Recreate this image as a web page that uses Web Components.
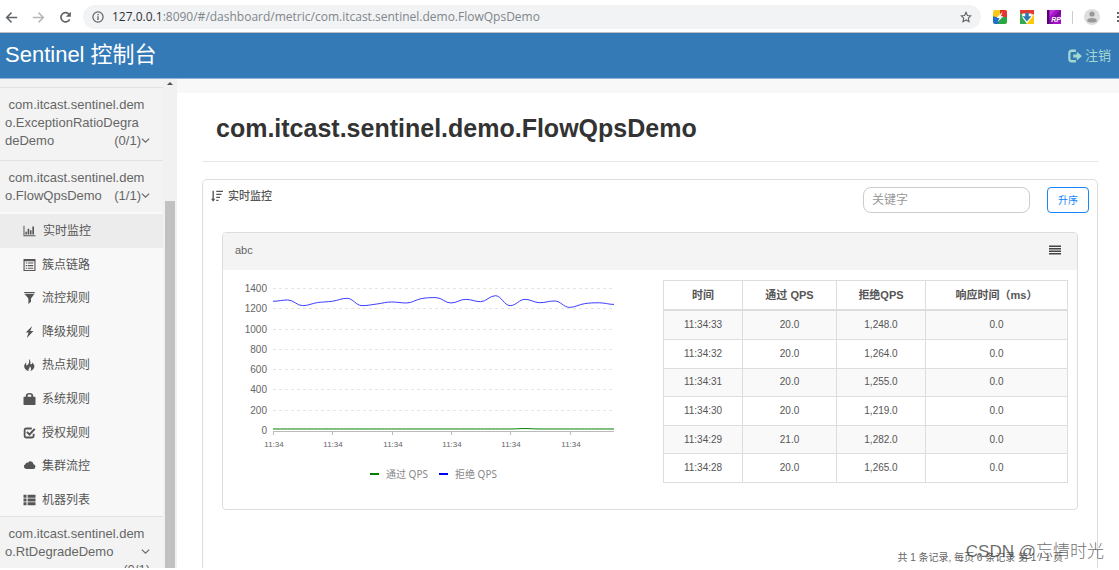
<!DOCTYPE html>
<html lang="zh-CN">
<head>
<meta charset="utf-8">
<title>Sentinel 控制台</title>
<style>
  html, body { height: 100%; margin: 0; }
  body {
    background: #fff; color: #555; overflow: hidden;
    font-family: "Liberation Sans", "Noto Sans CJK SC", sans-serif; font-size: 12px;
  }
</style>
</head>
<body>
<sentinel-app></sentinel-app>
<script>
const ICONS = {
  back: '<path d="M15 8H2M8 2L2 8l6 6" fill="none" stroke="currentColor" stroke-width="1.8"/>',
  forward: '<path d="M1 8h13M8 2l6 6-6 6" fill="none" stroke="currentColor" stroke-width="1.8"/>',
  reload: '<path d="M13.2 10.2A5.7 5.7 0 1 1 12.4 4" fill="none" stroke="currentColor" stroke-width="2"/><path d="M14.6 1v6.2H8.4z"/>',
  info: '<circle cx="8" cy="8" r="6.8" fill="none" stroke="currentColor" stroke-width="1.6"/><path d="M7.1 7h1.8v5H7.1zM7.1 4h1.8v1.8H7.1z"/>',
  star: '<path d="M8 1.8l1.9 4.2 4.6.5-3.4 3.1.9 4.6L8 11.900l-4 2.300.9-4.600L1.500 6.500l4.600-.5z" fill="none" stroke="currentColor" stroke-width="1.500"/>',
  bolt: '<rect width="16" height="16" rx="2.500" fill="#f8ca18"/><path d="M8 0h5.500A2.500 2.500 0 0 1 16 2.500V8H8z" fill="#e2362f"/><path d="M0 7l8 2v7H2.500A2.500 2.500 0 0 1 0 13.500z" fill="#1d6fc4"/><path d="M8 8h8v5.500a2.500 2.500 0 0 1-2.500 2.500H6z" fill="#28a745"/><path d="M11 2L4 9h3.500L5 14l7-7H9z" fill="#fff"/>',
  download: '<path d="M0 0h16v5H0z" fill="#e23c32"/><path d="M0 2l8 14H0z" fill="#35a853"/><path d="M16 5v11H7z" fill="#fbcb08"/><path d="M3 4h10v5l-5 6-5-6z" fill="#fff"/><path d="M6 3h4v4h3l-5 6-5-6h3z" fill="#2f78b7"/>',
  axure: '<rect width="16" height="16" fill="#a312c5"/><path d="M0 0h2.500v16H0z" fill="#540070"/><path d="M3 12L15 0h1v5L5 16H3z" fill="#7c0ba0"/><path d="M4 0h6L3 7V1z" fill="#bf34dc"/>',
  avatar: '<circle cx="8" cy="8" r="8" fill="#dedede"/><circle cx="8" cy="5" r="2.600" fill="#999"/><path d="M3 12c0-2 2-3 5-3s5 1 5 3c-1 1-3 1.500-5 1.500S4 13 3 12z" fill="#999"/>',
  logout: '<path d="M9 2H4.500Q1.500 2 1.500 5v6q0 3 3 3H9" fill="none" stroke="currentColor" stroke-width="2.600"/><path d="M10 3l6 5-6 5v-3.200H6V6.200h4z"/>',
  chart: '<path d="M0 1h1.300v12.600H16V15H0zM2.500 9h2v3.500h-2zM5.500 5h2.200v7.500H5.500zM8.700 7h2v5.500h-2zM11.800 2H14v10.500h-2.200z"/>',
  list: '<path d="M0 0h16v16H0zM1.500 3v11.500h13V3z" fill-rule="evenodd"/><path d="M3 4.500h2V6H3zM6 4.500h7V6H6zM3 8h2v1.500H3zM6 8h7v1.500H6zM3 11.500h2V13H3zM6 11.500h7V13H6z"/>',
  filter: '<path d="M1 0h14v1.500H1zM1.500 2.500h13L10 8.500V13l-3.500 3V8.500z"/>',
  flash: '<path d="M11.500 0L3 8.500h3.700L4.500 16l8.800-9.500H9z"/>',
  fire: '<path d="M7 0c4 3 1 6 3 7 1.200.5 1.600-1 1.300-2.500C14 6.500 15.500 9 14 12c-1 2-3 3.500-5 4 2-3 1-4.500-.5-6.500C8 12 7.500 13 6.500 14L7 16C3 15 .5 12 1 8.500 1.400 6.500 2.500 5.500 3.500 4.500c0 1.500-.2 3.500.8 4C6.500 8 8.500 4 7 0z"/>',
  lock: '<path d="M3 5V4C3 1.300 4.800 0 8 0s5 1.300 5 4v1h2q1 0 1 1v9q0 1-1 1H1q-1 0-1-1V6q0-1 1-1zM5.500 5h5V4c0-1.300-1-1.900-2.500-1.900S5.500 2.700 5.500 4z" fill-rule="evenodd"/>',
  check: '<path d="M11 2H4Q1.500 2 1.500 4.500v7Q1.500 14 4 14h7q2.500 0 2.500-2.500V9" fill="none" stroke="currentColor" stroke-width="2.400"/><path d="M4.500 6.500L8 10l7-7.500" fill="none" stroke="currentColor" stroke-width="2.600"/>',
  cloud: '<path d="M3.500 12A3.400 3.400 0 0 1 2.500 5.500 3 3 0 0 1 6 3.500a4 4 0 0 1 7.300 2A3.300 3.300 0 0 1 13 12z"/>',
  thlist: '<path d="M0 1h4v4H0zM5.500 1H16v4H5.500zM0 6h4v4H0zM5.500 6H16v4H5.500zM0 11h4v4H0zM5.500 11H16v4H5.500z"/>',
  sort: '<path d="M2 1h1.800v10.500h2L2.900 15.500 0 11.500h2zM7 1h9v1.800H7zM7 5h7v1.800H7zM7 9h5v1.800H7zM7 13h3v1.800H7z"/>',
  menu: '<path d="M0 2h16v2H0zM0 5.300h16v2H0zM0 8.600h16v2H0zM0 12h16v2H0z"/>',
  down: '<path d="M1.500 4.500L8 11l6.500-6.500" fill="none" stroke="currentColor" stroke-width="2"/>'
};

function define(name, html, setup) {
  const template = document.createElement('template');
  template.innerHTML = html;
  customElements.define(name, class extends HTMLElement {
    constructor() {
      super();
      this.attachShadow({ mode: 'open' }).append(template.content.cloneNode(true));
    }
    connectedCallback() { if (setup) setup.call(this, this.shadowRoot); }
  });
}

define('g-icon', `
  <style>
    :host { display: inline-block; width: 12px; height: 12px; flex: none; }
    svg { display: block; width: 100%; height: 100%; }
  </style>
  <svg viewBox="0 0 16 16" fill="currentColor" aria-hidden="true"></svg>`,
  function (root) { root.querySelector('svg').innerHTML = ICONS[this.getAttribute('name')] || ''; });

define('browser-bar', `
  <style>
    :host { display: flex; align-items: center; height: 33px; padding-left: 5px; box-sizing: border-box;
      border-bottom: 1px solid #c0c0c0; color: #5f6368; background: #fff; flex: none; }
    button { all: unset; display: flex; }
    .nav { display: flex; gap: 14px; flex: none; }
    .nav g-icon { width: 13px; height: 13px; }
    .nav button:nth-child(2) { color: #b5b7b9; }
    .url { flex: 1; min-width: 0; display: flex; align-items: center; height: 24px; margin: 2px 12px 0 11px; padding: 0 9px;
      border-radius: 12px; background: #f1f3f4; gap: 8px; }
    .text { flex: 1; min-width: 0; overflow: hidden; white-space: nowrap; color: #80868b;
      font: 12px/16px "Open Sans", "Noto Sans", sans-serif; outline: none; }
    .text b { font-weight: 400; color: #303134; }
    .nav, .ext { padding-top: 2px; }
    .ext { display: flex; align-items: center; gap: 13px; flex: none; }
    .ext g-icon { width: 14px; height: 14px; }
    .ext .me { width: 16px; height: 16px; }
    .rp { position: relative; }
    .rp span { position: absolute; right: 0; bottom: 1px; font: italic bold 7px/7px "Liberation Sans", sans-serif; color: #fff; }
    i { width: 1px; height: 13px; margin: 0 -2px; background: #ccc; }
    .dots { width: 2px; height: 11px; margin-left: 4px;
      background: repeating-linear-gradient(#5f6368 0 2px, transparent 2px 4px); }
  </style>
  <div class="nav">
    <button aria-label="后退"><g-icon name="back"></g-icon></button>
    <button aria-label="前进"><g-icon name="forward"></g-icon></button>
    <button aria-label="刷新"><g-icon name="reload"></g-icon></button>
  </div>
  <div class="url">
    <g-icon name="info"></g-icon>
    <div class="text" role="textbox" aria-label="地址" contenteditable="true" spellcheck="false"><b>127.0.0.1</b>:8090/#/dashboard/metric/com.itcast.sentinel.demo.FlowQpsDemo</div>
    <button aria-label="收藏"><g-icon name="star"></g-icon></button>
  </div>
  <div class="ext">
    <button aria-label="扩展"><g-icon name="bolt"></g-icon></button>
    <button aria-label="下载"><g-icon name="download"></g-icon></button>
    <button class="rp"><g-icon name="axure"></g-icon><span>RP</span></button>
    <i></i>
    <button aria-label="用户"><g-icon class="me" name="avatar"></g-icon></button>
    <button class="dots" aria-label="菜单"></button>
  </div>`);

define('app-header', `
  <style>
    :host { display: flex; align-items: center; justify-content: space-between; height: 46px; box-sizing: border-box;
      padding: 0 8px 2px 5px; background: #337ab7; border-bottom: 1px solid #8fb5d8; flex: none; }
    .brand { color: #fff; font-size: 22px; line-height: 30px; text-decoration: none; white-space: nowrap; }
    .out { display: flex; align-items: center; gap: 3px; color: #a4d8d0; font-size: 13px; line-height: 18px;
      text-decoration: none; padding-top: 2px; }
    g-icon { width: 14px; height: 14px; }
  </style>
  <a class="brand" href="#/dashboard">Sentinel 控制台</a>
  <a class="out" href="#/login"><g-icon name="logout"></g-icon>注销</a>`);

define('nav-group', `
  <style>
    :host { display: block; border-top: 1px solid #e2e2e2; }
    .head { display: grid; grid-template-columns: 1fr auto auto; padding: 8px 13px 10px 5px; background: #f3f3f3;
      color: #666; font-size: 13px; line-height: 18px; text-decoration: none; }
    :host([open]) .head { padding-bottom: 7px; margin-bottom: 2px; }
    .full { grid-column: 1 / -1; white-space: pre; }
    .down { width: 9px; height: 9px; margin-top: 4px; }
    :host([wrap]) .count { grid-row: 3; grid-column: 2 / 4; }
    :host([wrap]) .down { grid-row: 2; grid-column: 3; }
    .sub { display: grid; grid-auto-rows: 1fr; min-height: 302px; }
    :host(:not([open])) .sub { display: none; }
  </style>
  <a class="head" href="#/dashboard"><span class="count"></span><g-icon class="down" name="down"></g-icon></a>
  <div class="sub"><slot></slot></div>`,
  function (root) {
    const head = root.querySelector('.head');
    const lines = this.getAttribute('lines').split('|');
    lines.reverse().forEach((text, i) => {
      const span = document.createElement('span');
      if (i) span.className = 'full';
      span.textContent = i === lines.length - 1 ? '\u00a0' + text : text;
      head.prepend(span);
    });
    root.querySelector('.count').textContent = this.getAttribute('count');
  });

define('nav-item', `
  <style>
    :host { display: flex; }
    a { flex: 1; display: flex; align-items: center; gap: 6px; padding: 1px 0 0 23px; color: #555;
      font-size: 12px; line-height: 18px; text-decoration: none; }
    :host([active]) a { background: #ececec; gap: 7px; }
    g-icon { width: 13px; height: 12px; }
  </style>
  <a><g-icon></g-icon><slot></slot></a>`,
  function (root) {
    root.querySelector('g-icon').setAttribute('name', this.getAttribute('icon'));
    root.querySelector('g-icon').connectedCallback();
    root.querySelector('a').href = '#/dashboard/' + this.getAttribute('icon');
  });

define('side-nav', `
  <style>
    :host { display: grid; grid-template-columns: 163px 14px; flex: none; overflow: hidden; background: #f8f8f8; }
    nav { overflow: hidden; min-height: 0; padding-top: 8px; background: linear-gradient(#f3f3f3 8px, #f8f8f8 8px); }
    .bar { display: flex; flex-direction: column; align-items: center; background: #f1f1f1; }
    .up { margin-top: 3px; border: 3px solid transparent; border-top: 0; border-bottom-color: #505050; }
    .thumb { flex: 1; width: 10px; margin-top: 116px; background: #c1c1c1; }
  </style>
  <nav>
    <nav-group lines="com.itcast.sentinel.dem|o.ExceptionRatioDegra|deDemo" count="(0/1)"></nav-group>
    <nav-group open lines="com.itcast.sentinel.dem|o.FlowQpsDemo" count="(1/1)">
      <nav-item active icon="chart">实时监控</nav-item>
      <nav-item icon="list">簇点链路</nav-item>
      <nav-item icon="filter">流控规则</nav-item>
      <nav-item icon="flash">降级规则</nav-item>
      <nav-item icon="fire">热点规则</nav-item>
      <nav-item icon="lock">系统规则</nav-item>
      <nav-item icon="check">授权规则</nav-item>
      <nav-item icon="cloud">集群流控</nav-item>
      <nav-item icon="thlist">机器列表</nav-item>
    </nav-group>
    <nav-group wrap lines="com.itcast.sentinel.dem|o.RtDegradeDemo" count="(0/1)"></nav-group>
  </nav>
  <div class="bar" aria-hidden="true"><div class="up"></div><div class="thumb"></div></div>`);

define('qps-chart', `
  <style>
    :host { display: block; }
    svg { display: block; width: 100%; height: auto; }
    text { fill: #666; font-family: "Liberation Sans", sans-serif; }
    .y { font-size: 10px; text-anchor: end; }
    .x { font-size: 8px; text-anchor: middle; }
    .key { font-family: "Noto Sans", "Noto Sans CJK SC", sans-serif; font-size: 10px; fill: #888; }
  </style>
  <svg viewBox="0 0 420 220" role="img" aria-label="QPS">
    <g class="grid"></g>
    <path class="pass" fill="none" stroke="#008000"/>
    <path class="block" fill="none" stroke="#3c3cff"/>
    <path d="M147 204h9" stroke="#008000" stroke-width="2"/><text class="key" x="163" y="208">通过 QPS</text>
    <path d="M216 204h9" stroke="#00f" stroke-width="2"/><text class="key" x="232" y="208">拒绝 QPS</text>
  </svg>`,
  function (root) {
    const left = 50, right = 391, base = 161, unit = 142 / 1400;
    const block = [1279, 1292, 1236, 1266, 1279, 1308, 1236, 1252, 1272, 1262, 1305, 1315,
                   1262, 1298, 1275, 1334, 1236, 1298, 1265, 1282, 1219, 1255, 1264, 1248];
    const pass = block.map((_, i) => (i === 17 ? 24 : 20));
    const step = (right - left) / (block.length - 1);
    let grid = '';
    for (let v = 0; v <= 1400; v += 200) {
      const y = Math.round(base - v * unit);
      grid += `<text class="y" x="44" y="${y + 3}">${v}</text>`;
      grid += v ? `<path d="M${left} ${y - 0.5}H${right}" stroke="#e4e4e4" stroke-dasharray="3 3"/>`
                : `<path d="M${left} ${y + 0.5}H${right}" stroke="#bbb"/>`;
    }
    for (let i = 0; i < 6; i++) {
      const x = Math.round(left + i * 4 * step);
      grid += `<path d="M${x + 0.5} 161v4" stroke="#bbb"/><text class="x" x="${x + 1}" y="177">11:34</text>`;
    }
    root.querySelector('.grid').innerHTML = grid;
    // Smooth curve whose tangent is flat at each local extreme.
    const curve = data => {
      const p = data.map((v, i) => [left + i * step, base - v * unit]);
      const slope = p.map((q, i) => {
        if (!i || i === p.length - 1) return 0;
        const a = q[1] - p[i - 1][1], b = p[i + 1][1] - q[1];
        return a * b <= 0 ? 0 : (a + b) / 2;
      });
      return p.map((q, i) => i
        ? `C${p[i - 1][0] + step / 2.5} ${p[i - 1][1] + slope[i - 1] / 2.5} ${q[0] - step / 2.5} ${q[1] - slope[i] / 2.5} ${q[0]} ${q[1]}`
        : `M${q[0]} ${q[1]}`).join('');
    };
    root.querySelector('.pass').setAttribute('d', curve(pass));
    root.querySelector('.block').setAttribute('d', curve(block));
  });

define('metric-table', `
  <style>
    :host { display: block; }
    table { width: 100%; height: 203px; border-collapse: collapse; table-layout: fixed; text-align: center; color: #555; }
    th, td { border: 1px solid #ddd; padding: 0; font-size: 10px; line-height: 14px; }
    thead th { height: 28px; border-bottom-width: 2px; font-size: 11px; }
    tbody tr:nth-child(odd) { background: #f9f9f9; }
    .time { width: 79px; }
    .pass { width: 94px; }
    .block { width: 89px; }
  </style>
  <table>
    <colgroup><col class="time"><col class="pass"><col class="block"><col></colgroup>
    <thead><tr><th>时间</th><th>通过 QPS</th><th>拒绝QPS</th><th>响应时间（ms）</th></tr></thead>
    <tbody>
      <tr><td>11:34:33</td><td>20.0</td><td>1,248.0</td><td>0.0</td></tr>
      <tr><td>11:34:32</td><td>20.0</td><td>1,264.0</td><td>0.0</td></tr>
      <tr><td>11:34:31</td><td>20.0</td><td>1,255.0</td><td>0.0</td></tr>
      <tr><td>11:34:30</td><td>20.0</td><td>1,219.0</td><td>0.0</td></tr>
      <tr><td>11:34:29</td><td>21.0</td><td>1,282.0</td><td>0.0</td></tr>
      <tr><td>11:34:28</td><td>20.0</td><td>1,265.0</td><td>0.0</td></tr>
    </tbody>
  </table>`);

define('metric-card', `
  <style>
    :host { display: block; border: 1px solid #ddd; border-radius: 4px; overflow: hidden; }
    header { display: flex; align-items: center; justify-content: space-between; height: 37px; box-sizing: border-box;
      padding: 0 16px 4px 12px; background: #f4f4f4; font-size: 11px; line-height: 16px; color: #666; }
    button { all: unset; display: flex; color: #444; }
    .body { display: grid; grid-template-columns: 420fr 20fr 405fr 9fr; padding-bottom: 19px; }
    metric-table { grid-column: 3; padding-top: 10px; }
  </style>
  <header><slot></slot><button aria-label="菜单"><g-icon name="menu"></g-icon></button></header>
  <div class="body"><qps-chart></qps-chart><metric-table></metric-table></div>`);

define('metric-panel', `
  <style>
    :host { display: block; border: 1px solid #ddd; border-radius: 5px; padding-bottom: 24px; }
    .tools { display: flex; align-items: flex-start; padding: 7px 8px 0; }
    h2 { flex: 1; display: flex; align-items: center; gap: 5px; margin: 1px 0 0; font-size: 11px; line-height: 16px;
      font-weight: 500; color: #555; }
    input { width: 167px; height: 26px; box-sizing: border-box; margin: 0 17px 0 0; padding: 0 8px; border: 1px solid #ccc;
      border-radius: 8px; font: inherit; font-size: 12px; outline: none; }
    input::placeholder { color: #999; }
    .sort { width: 42px; height: 26px; box-sizing: border-box; padding: 0 0 1px; border: 1px solid #1684fc; border-radius: 4px;
      background: #fff; color: #1684fc; font: inherit; font-size: 10px; }
    metric-card { margin: 19px 19px 0; }
    footer { margin-top: 40px; padding-right: 34px; text-align: right; font-size: 10px; line-height: 16px; color: #666; }
  </style>
  <div class="tools">
    <h2><g-icon name="sort"></g-icon>实时监控</h2>
    <input type="text" placeholder="关键字" aria-label="关键字">
    <button class="sort" type="button">升序</button>
  </div>
  <metric-card>abc</metric-card>
  <footer>共 1 条记录, 每页 6 条记录 第 1 / 1 页</footer>`);

define('sentinel-app', `
  <style>
    :host { display: flex; flex-direction: column; height: 100%; box-sizing: border-box; padding-bottom: 2px; position: relative; }
    .main { flex: 1; min-height: 0; display: flex; overflow: hidden; }
    main { flex: 1; min-width: 0; overflow: hidden; border-top: 14px solid #f8f8f8; padding: 0 21px 0 25px; }
    h1 { margin: 0 0 17px; padding: 20px 14px 17px; border-bottom: 1px solid #e7e7e7; color: #333;
      font-size: 25px; line-height: 31px; }
    .mark { position: absolute; right: 15px; bottom: 6px; font-size: 17px; line-height: 24px; color: rgba(60, 60, 60, .75);
      font-weight: 300; pointer-events: none; }
  </style>
  <browser-bar></browser-bar>
  <app-header></app-header>
  <div class="main">
    <side-nav></side-nav>
    <main>
      <h1>com.itcast.sentinel.demo.FlowQpsDemo</h1>
      <metric-panel></metric-panel>
    </main>
  </div>
  <div class="mark">CSDN @忘情时光</div>`);
</script>
</body>
</html>
